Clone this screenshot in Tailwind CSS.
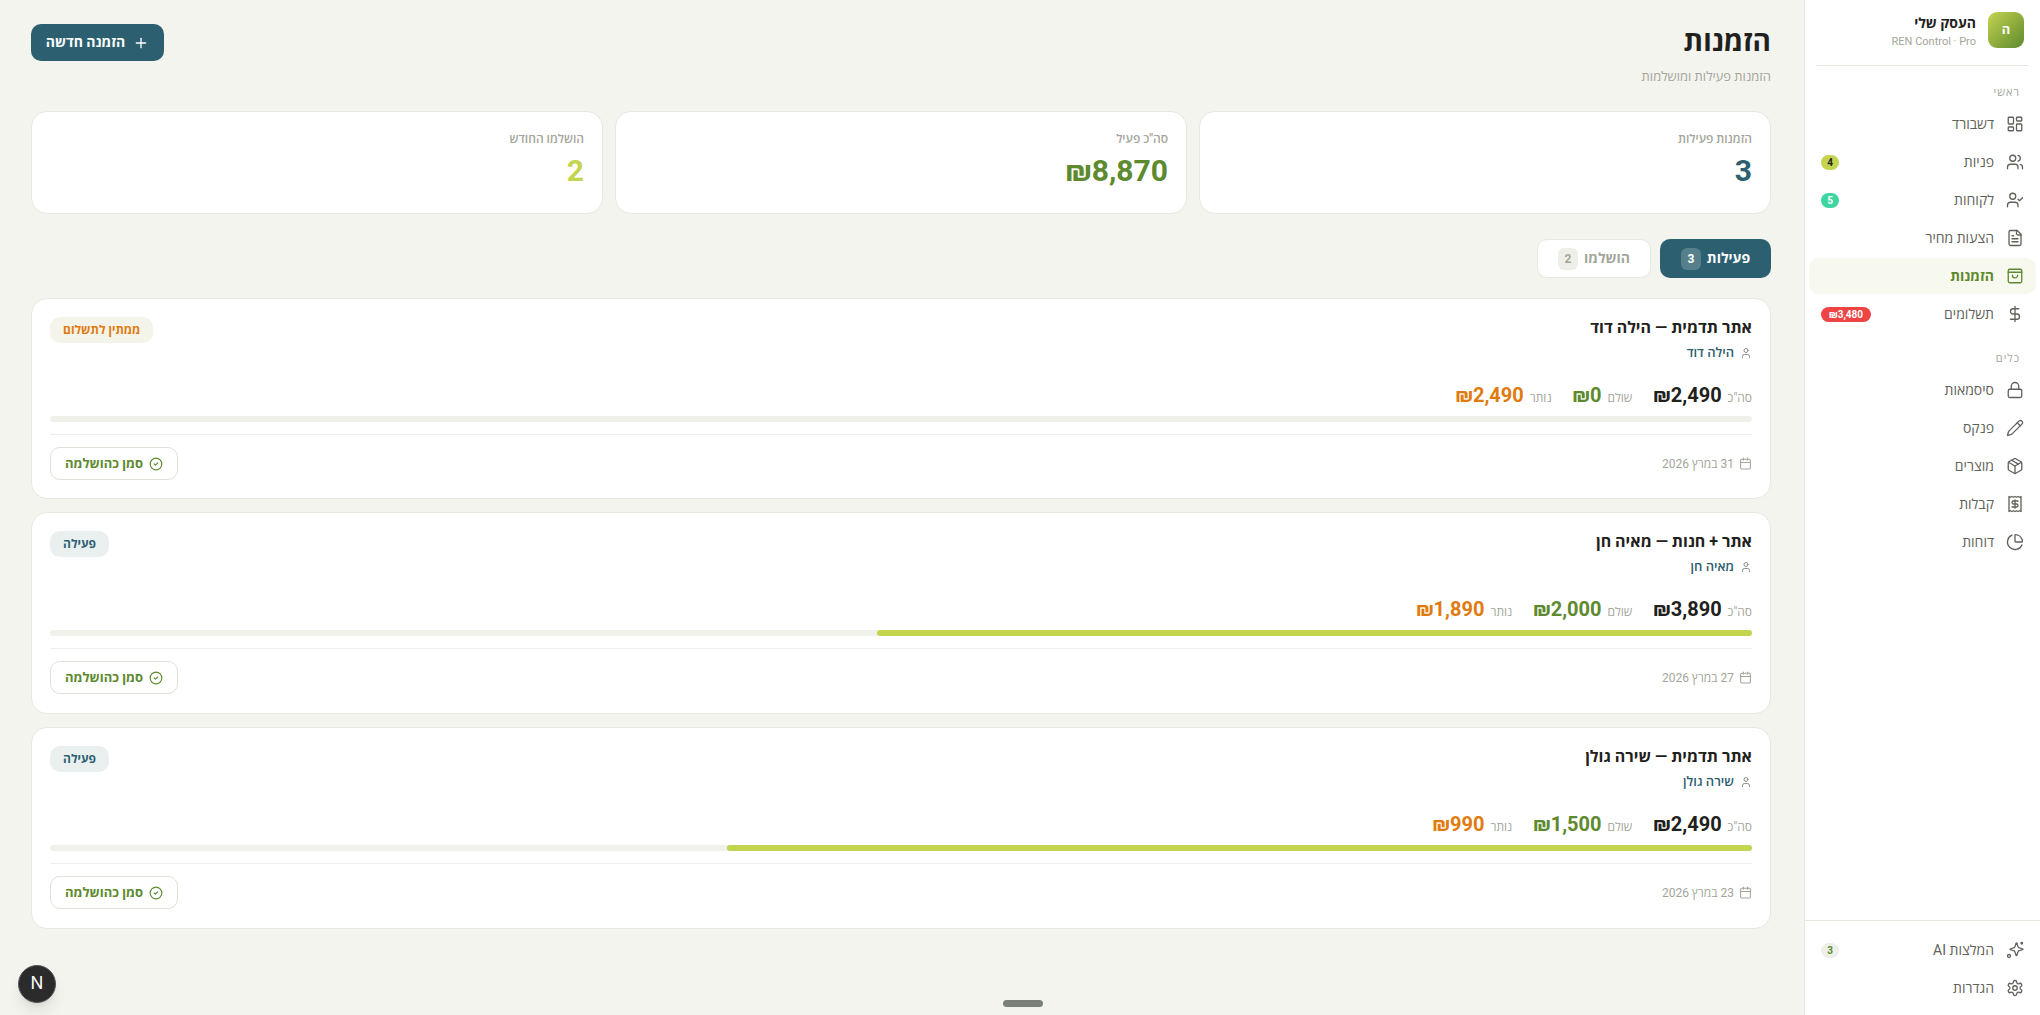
<!DOCTYPE html>
<html lang="he" dir="rtl">
<head>
    <meta charset="UTF-8">
    <title>הזמנות</title>
    <script src="https://cdn.jsdelivr.net/npm/@tailwindcss/browser@4"></script>
</head>
<body class="h-[1015px] overflow-hidden flex bg-[#f4f4ef] text-[#1f211c] font-['Roboto','Open_Sans','Liberation_Sans',sans-serif]">
    <!-- sidebar -->
    <aside class="w-[236px] shrink-0 h-full flex flex-col bg-white border-l border-[#e8e8e1] px-[4px]">
        <div class="mx-[8px] h-[66px] pt-[12px] flex gap-[12px] border-b border-[#e8e8e1] pr-[4px]">
            <div class="w-[36px] h-[36px] rounded-[9px] bg-gradient-to-br from-[#c5d44f] to-[#5d8a2e] flex items-center justify-center text-white text-[13px] font-bold">ה</div>
            <div class="pt-[1px]">
                <div class="text-[14px] leading-[20px] font-bold">העסק שלי</div>
                <div class="text-[11px] leading-[16px] mt-[1px] text-[#a3a69b]">REN Control · Pro</div>
            </div>
        </div>
        <div class="text-[11px] leading-[14px] text-[#a3a69b] tracking-[1px] pr-[16px] mt-[20px] mb-[6px]">ראשי</div>
        <nav class="flex flex-col gap-[2px] text-[14px] text-[#5f6259]">
            <a class="h-[36px] flex items-center gap-[12px] px-[12px] rounded-[10px]">
                <svg class="w-[18px] h-[18px]" viewBox="0 0 24 24" fill="none" stroke="currentColor" stroke-width="1.75" stroke-linecap="round" stroke-linejoin="round"><rect width="7" height="9" x="3" y="3" rx="1"/><rect width="7" height="5" x="14" y="3" rx="1"/><rect width="7" height="9" x="14" y="12" rx="1"/><rect width="7" height="5" x="3" y="16" rx="1"/></svg>
                <span class="flex-1">דשבורד</span>
            </a>
            <a class="h-[36px] flex items-center gap-[12px] px-[12px] rounded-[10px]">
                <svg class="w-[18px] h-[18px]" viewBox="0 0 24 24" fill="none" stroke="currentColor" stroke-width="1.75" stroke-linecap="round" stroke-linejoin="round"><path d="M16 21v-2a4 4 0 0 0-4-4H6a4 4 0 0 0-4 4v2"/><circle cx="9" cy="7" r="4"/><path d="M22 21v-2a4 4 0 0 0-3-3.87"/><path d="M16 3.13a4 4 0 0 1 0 7.75"/></svg>
                <span class="flex-1">פניות</span>
                <span class="w-[18px] h-[15px] rounded-full bg-[#c5d44f] text-[#1f211c] text-[10px] font-bold flex items-center justify-center">4</span>
            </a>
            <a class="h-[36px] flex items-center gap-[12px] px-[12px] rounded-[10px]">
                <svg class="w-[18px] h-[18px]" viewBox="0 0 24 24" fill="none" stroke="currentColor" stroke-width="1.75" stroke-linecap="round" stroke-linejoin="round"><path d="M16 21v-2a4 4 0 0 0-4-4H6a4 4 0 0 0-4 4v2"/><circle cx="9" cy="7" r="4"/><polyline points="16 11 18 13 22 9"/></svg>
                <span class="flex-1">לקוחות</span>
                <span class="w-[18px] h-[15px] rounded-full bg-[#3dd6a0] text-white text-[10px] font-bold flex items-center justify-center">5</span>
            </a>
            <a class="h-[36px] flex items-center gap-[12px] px-[12px] rounded-[10px]">
                <svg class="w-[18px] h-[18px]" viewBox="0 0 24 24" fill="none" stroke="currentColor" stroke-width="1.75" stroke-linecap="round" stroke-linejoin="round"><path d="M15 2H6a2 2 0 0 0-2 2v16a2 2 0 0 0 2 2h12a2 2 0 0 0 2-2V7Z"/><path d="M14 2v4a2 2 0 0 0 2 2h4"/><path d="M10 9H8"/><path d="M16 13H8"/><path d="M16 17H8"/></svg>
                <span class="flex-1">הצעות מחיר</span>
            </a>
            <a class="h-[36px] flex items-center gap-[12px] px-[12px] rounded-[10px] bg-[#f7f8ee] text-[#5d8a2e] font-bold">
                <svg class="w-[18px] h-[18px]" viewBox="0 0 24 24" fill="none" stroke="currentColor" stroke-width="1.75" stroke-linecap="round" stroke-linejoin="round"><path d="M5 3h14a2 2 0 0 1 2 2v14a2 2 0 0 1-2 2H5a2 2 0 0 1-2-2V5a2 2 0 0 1 2-2Z"/><path d="M3 7h18"/><path d="M15.5 11a3.5 3.5 0 0 1-7 0"/></svg>
                <span class="flex-1">הזמנות</span>
            </a>
            <a class="h-[36px] flex items-center gap-[12px] px-[12px] rounded-[10px]">
                <svg class="w-[18px] h-[18px]" viewBox="0 0 24 24" fill="none" stroke="currentColor" stroke-width="1.75" stroke-linecap="round" stroke-linejoin="round"><line x1="12" x2="12" y1="2" y2="22"/><path d="M17 5H9.5a3.5 3.5 0 0 0 0 7h5a3.5 3.5 0 0 1 0 7H6"/></svg>
                <span class="flex-1">תשלומים</span>
                <span class="h-[15px] w-[50px] rounded-full bg-[#ef4444] text-white text-[10px] font-bold flex items-center justify-center">₪3,480</span>
            </a>
        </nav>
        <div class="text-[11px] leading-[14px] text-[#a3a69b] tracking-[1px] pr-[16px] mt-[20px] mb-[6px]">כלים</div>
        <nav class="flex flex-col gap-[2px] text-[14px] text-[#5f6259]">
            <a class="h-[36px] flex items-center gap-[12px] px-[12px]">
                <svg class="w-[18px] h-[18px]" viewBox="0 0 24 24" fill="none" stroke="currentColor" stroke-width="1.75" stroke-linecap="round" stroke-linejoin="round"><rect width="18" height="11" x="3" y="11" rx="2"/><path d="M7 11V7a5 5 0 0 1 10 0v4"/></svg>
                <span class="flex-1">סיסמאות</span>
            </a>
            <a class="h-[36px] flex items-center gap-[12px] px-[12px]">
                <svg class="w-[18px] h-[18px]" viewBox="0 0 24 24" fill="none" stroke="currentColor" stroke-width="1.75" stroke-linecap="round" stroke-linejoin="round"><path d="M21.174 6.812a1 1 0 0 0-3.986-3.987L3.842 16.174a2 2 0 0 0-.5.83l-1.321 4.352a.5.5 0 0 0 .623.622l4.353-1.32a2 2 0 0 0 .83-.497z"/><path d="m15 5 4 4"/></svg>
                <span class="flex-1">פנקס</span>
            </a>
            <a class="h-[36px] flex items-center gap-[12px] px-[12px]">
                <svg class="w-[18px] h-[18px]" viewBox="0 0 24 24" fill="none" stroke="currentColor" stroke-width="1.75" stroke-linecap="round" stroke-linejoin="round"><path d="m7.5 4.27 9 5.15"/><path d="M21 8a2 2 0 0 0-1-1.73l-7-4a2 2 0 0 0-2 0l-7 4A2 2 0 0 0 3 8v8a2 2 0 0 0 1 1.73l7 4a2 2 0 0 0 2 0l7-4A2 2 0 0 0 21 16Z"/><path d="m3.3 7 8.7 5 8.7-5"/><path d="M12 22V12"/></svg>
                <span class="flex-1">מוצרים</span>
            </a>
            <a class="h-[36px] flex items-center gap-[12px] px-[12px]">
                <svg class="w-[18px] h-[18px]" viewBox="0 0 24 24" fill="none" stroke="currentColor" stroke-width="1.75" stroke-linecap="round" stroke-linejoin="round"><path d="M4 2v20l2-1 2 1 2-1 2 1 2-1 2 1 2-1 2 1V2l-2 1-2-1-2 1-2-1-2 1-2-1-2 1Z"/><path d="M16 8h-6a2 2 0 1 0 0 4h4a2 2 0 1 1 0 4H8"/><path d="M12 17.5v-11"/></svg>
                <span class="flex-1">קבלות</span>
            </a>
            <a class="h-[36px] flex items-center gap-[12px] px-[12px]">
                <svg class="w-[18px] h-[18px]" viewBox="0 0 24 24" fill="none" stroke="currentColor" stroke-width="1.75" stroke-linecap="round" stroke-linejoin="round"><path d="M21 12c.552 0 1.005-.449.95-.998a10 10 0 0 0-8.953-8.951c-.55-.055-.998.398-.998.95v8a1 1 0 0 0 1 1z"/><path d="M21.21 15.89A10 10 0 1 1 8 2.83"/></svg>
                <span class="flex-1">דוחות</span>
            </a>
        </nav>
        <div class="mt-auto -mx-[4px] px-[4px] border-t border-[#e8e8e1] pt-[11px] pb-[9px] flex flex-col gap-[2px] text-[14px] text-[#5f6259]">
            <a class="h-[36px] flex items-center gap-[12px] px-[12px]">
                <svg class="w-[18px] h-[18px]" viewBox="0 0 24 24" fill="none" stroke="currentColor" stroke-width="1.75" stroke-linecap="round" stroke-linejoin="round"><path d="M9.9 15.5A2 2 0 0 0 8.5 14l-4.6-1.5a.5.5 0 0 1 0-1L8.5 10A2 2 0 0 0 10 8.500l1.500-4.600a.5.5 0 0 1 1 0L14 8.500A2 2 0 0 0 15.500 10l4.600 1.500a.5.5 0 0 1 0 1L15.500 14a2 2 0 0 0-1.500 1.500l-1.500 4.600a.5.5 0 0 1-1 0z" transform="translate(2 -1)"/><circle cx="21" cy="3" r="1"/><circle cx="4" cy="20" r="2"/></svg>
                <span class="flex-1">המלצות AI</span>
                <span class="w-[18px] h-[15px] rounded-full bg-[#efefe9] text-[#5d8a2e] text-[10px] font-bold flex items-center justify-center">3</span>
            </a>
            <a class="h-[36px] flex items-center gap-[12px] px-[12px]">
                <svg class="w-[18px] h-[18px]" viewBox="0 0 24 24" fill="none" stroke="currentColor" stroke-width="1.75" stroke-linecap="round" stroke-linejoin="round"><path d="M12.22 2h-.44a2 2 0 0 0-2 2v.18a2 2 0 0 1-1 1.73l-.43.25a2 2 0 0 1-2 0l-.15-.08a2 2 0 0 0-2.73.73l-.22.38a2 2 0 0 0 .73 2.73l.15.1a2 2 0 0 1 1 1.72v.51a2 2 0 0 1-1 1.74l-.15.09a2 2 0 0 0-.73 2.73l.22.38a2 2 0 0 0 2.73.73l.15-.08a2 2 0 0 1 2 0l.43.25a2 2 0 0 1 1 1.73V20a2 2 0 0 0 2 2h.44a2 2 0 0 0 2-2v-.18a2 2 0 0 1 1-1.73l.43-.25a2 2 0 0 1 2 0l.15.08a2 2 0 0 0 2.73-.73l.22-.39a2 2 0 0 0-.73-2.73l-.15-.08a2 2 0 0 1-1-1.74v-.5a2 2 0 0 1 1-1.74l.15-.09a2 2 0 0 0 .73-2.73l-.22-.38a2 2 0 0 0-2.73-.73l-.15.08a2 2 0 0 1-2 0l-.43-.25a2 2 0 0 1-1-1.73V4a2 2 0 0 0-2-2z"/><circle cx="12" cy="12" r="3"/></svg>
                <span class="flex-1">הגדרות</span>
            </a>
        </div>
    </aside>

    <main class="flex-1 min-w-0 pt-[24px] px-[33px] pl-[31px] relative">
        <div class="flex justify-between items-start h-[87px]">
            <div>
                <h1 class="text-[28px] leading-[36px] font-bold">הזמנות</h1>
                <p class="text-[13px] leading-[18px] mt-[8px] text-[#a3a69b]">הזמנות פעילות ומושלמות</p>
            </div>
            <button class="h-[37px] w-[133px] rounded-[10px] bg-[#2c6070] text-white text-[14px] font-bold flex items-center justify-center gap-[8px]">
                <svg class="w-[16px] h-[16px]" viewBox="0 0 24 24" fill="none" stroke="currentColor" stroke-width="2" stroke-linecap="round"><path d="M5 12h14"/><path d="M12 5v14"/></svg>
                הזמנה חדשה
            </button>
        </div>

        <div class="grid grid-cols-3 gap-[12px]">
            <div class="h-[103px] bg-white rounded-[16px] border border-[#e8e8e1] px-[18px] pt-[19px]">
                <div class="text-[12px] leading-[16px] font-semibold text-[#a3a69b]">הזמנות פעילות</div>
                <div class="text-[30px] leading-[36px] mt-[6px] font-bold text-[#2c6070]">3</div>
            </div>
            <div class="h-[103px] bg-white rounded-[16px] border border-[#e8e8e1] px-[18px] pt-[19px]">
                <div class="text-[12px] leading-[16px] font-semibold text-[#a3a69b]">סה"כ פעיל</div>
                <div class="text-[30px] leading-[36px] mt-[6px] font-bold text-[#5d8a2e]">₪8,870</div>
            </div>
            <div class="h-[103px] bg-white rounded-[16px] border border-[#e8e8e1] px-[18px] pt-[19px]">
                <div class="text-[12px] leading-[16px] font-semibold text-[#a3a69b]">הושלמו החודש</div>
                <div class="text-[30px] leading-[36px] mt-[6px] font-bold text-[#c5d44f]">2</div>
            </div>
        </div>

        <div class="flex gap-[9px] mt-[25px] text-[14px] font-bold">
            <button class="h-[39px] w-[111px] rounded-[10px] bg-[#2c6070] text-white flex items-center justify-center gap-[6px]">
                פעילות
                <span class="w-[20px] h-[22px] rounded-[6px] bg-white/20 text-[12px] flex items-center justify-center">3</span>
            </button>
            <button class="h-[39px] w-[114px] rounded-[10px] bg-white border border-[#e8e8e1] text-[#a3a69b] flex items-center justify-center gap-[6px]">
                הושלמו
                <span class="w-[20px] h-[22px] rounded-[6px] bg-[#efefe9] text-[12px] flex items-center justify-center">2</span>
            </button>
        </div>

        <div class="flex flex-col gap-[13px] mt-[20px]">
            <!-- order 1 -->
            <div class="h-[201px] bg-white rounded-[16px] border border-[#e8e8e1] px-[18px] pt-[18px]">
                <div class="flex justify-between items-start h-[62px]">
                    <div>
                        <div class="text-[16px] leading-[22px] font-bold">אתר תדמית — הילה דוד</div>
                        <div class="flex items-center gap-[6px] mt-[5px] text-[13px] leading-[18px] font-semibold text-[#2c6070]">
                            <svg class="w-[12px] h-[12px] text-[#8a8d83]" viewBox="0 0 24 24" fill="none" stroke="currentColor" stroke-width="2" stroke-linecap="round" stroke-linejoin="round"><path d="M19 21v-2a4 4 0 0 0-4-4H9a4 4 0 0 0-4 4v2"/><circle cx="12" cy="7" r="4"/></svg>
                            הילה דוד
                        </div>
                    </div>
                    <span class="h-[26px] px-[13px] rounded-[10px] bg-[#f4f4ea] text-[#e07b10] text-[12px] font-bold flex items-center">ממתין לתשלום</span>
                </div>
                <div class="flex gap-[21px] items-baseline h-[37px] pt-[1px]">
                    <div class="flex items-baseline gap-[6px]"><span class="text-[12px] text-[#a3a69b]">סה"כ</span><span class="text-[20px] font-bold">₪2,490</span></div>
                    <div class="flex items-baseline gap-[6px]"><span class="text-[12px] text-[#a3a69b]">שולם</span><span class="text-[20px] font-bold text-[#5d8a2e]">₪0</span></div>
                    <div class="flex items-baseline gap-[6px]"><span class="text-[12px] text-[#a3a69b]">נותר</span><span class="text-[20px] font-bold text-[#e07b10]">₪2,490</span></div>
                </div>
                <div class="h-[6px] rounded-full bg-[#f1f1ec]"></div>
                <div class="border-t border-[#efefe9] mt-[12px] pt-[12px] flex justify-between items-center">
                    <div class="flex items-center gap-[5px] text-[12px] text-[#a3a69b]">
                        <svg class="w-[13px] h-[13px]" viewBox="0 0 24 24" fill="none" stroke="currentColor" stroke-width="2" stroke-linecap="round" stroke-linejoin="round"><path d="M8 2v4"/><path d="M16 2v4"/><rect width="18" height="18" x="3" y="4" rx="2"/><path d="M3 10h18"/></svg>
                        31 במרץ 2026
                    </div>
                    <button class="h-[33px] w-[128px] rounded-[10px] border border-[#e0e0d8] text-[#5d8a2e] text-[13px] font-bold flex items-center justify-center gap-[6px]">
                        <svg class="w-[14px] h-[14px]" viewBox="0 0 24 24" fill="none" stroke="currentColor" stroke-width="2" stroke-linecap="round" stroke-linejoin="round"><circle cx="12" cy="12" r="10"/><path d="m9 12 2 2 4-4"/></svg>
                        סמן כהושלמה
                    </button>
                </div>
            </div>
            <!-- order 2 -->
            <div class="h-[202px] bg-white rounded-[16px] border border-[#e8e8e1] px-[18px] pt-[18px]">
                <div class="flex justify-between items-start h-[62px]">
                    <div>
                        <div class="text-[16px] leading-[22px] font-bold">אתר + חנות — מאיה חן</div>
                        <div class="flex items-center gap-[6px] mt-[5px] text-[13px] leading-[18px] font-semibold text-[#2c6070]">
                            <svg class="w-[12px] h-[12px] text-[#8a8d83]" viewBox="0 0 24 24" fill="none" stroke="currentColor" stroke-width="2" stroke-linecap="round" stroke-linejoin="round"><path d="M19 21v-2a4 4 0 0 0-4-4H9a4 4 0 0 0-4 4v2"/><circle cx="12" cy="7" r="4"/></svg>
                            מאיה חן
                        </div>
                    </div>
                    <span class="h-[26px] px-[13px] rounded-[10px] bg-[#eaeff0] text-[#2c6070] text-[12px] font-bold flex items-center">פעילה</span>
                </div>
                <div class="flex gap-[21px] items-baseline h-[37px] pt-[1px]">
                    <div class="flex items-baseline gap-[6px]"><span class="text-[12px] text-[#a3a69b]">סה"כ</span><span class="text-[20px] font-bold">₪3,890</span></div>
                    <div class="flex items-baseline gap-[6px]"><span class="text-[12px] text-[#a3a69b]">שולם</span><span class="text-[20px] font-bold text-[#5d8a2e]">₪2,000</span></div>
                    <div class="flex items-baseline gap-[6px]"><span class="text-[12px] text-[#a3a69b]">נותר</span><span class="text-[20px] font-bold text-[#e07b10]">₪1,890</span></div>
                </div>
                <div class="h-[6px] rounded-full bg-[#f1f1ec]"><div class="h-full rounded-full bg-[#c5d44f] w-[51.4%]"></div></div>
                <div class="border-t border-[#efefe9] mt-[12px] pt-[12px] flex justify-between items-center">
                    <div class="flex items-center gap-[5px] text-[12px] text-[#a3a69b]">
                        <svg class="w-[13px] h-[13px]" viewBox="0 0 24 24" fill="none" stroke="currentColor" stroke-width="2" stroke-linecap="round" stroke-linejoin="round"><path d="M8 2v4"/><path d="M16 2v4"/><rect width="18" height="18" x="3" y="4" rx="2"/><path d="M3 10h18"/></svg>
                        27 במרץ 2026
                    </div>
                    <button class="h-[33px] w-[128px] rounded-[10px] border border-[#e0e0d8] text-[#5d8a2e] text-[13px] font-bold flex items-center justify-center gap-[6px]">
                        <svg class="w-[14px] h-[14px]" viewBox="0 0 24 24" fill="none" stroke="currentColor" stroke-width="2" stroke-linecap="round" stroke-linejoin="round"><circle cx="12" cy="12" r="10"/><path d="m9 12 2 2 4-4"/></svg>
                        סמן כהושלמה
                    </button>
                </div>
            </div>
            <!-- order 3 -->
            <div class="h-[202px] bg-white rounded-[16px] border border-[#e8e8e1] px-[18px] pt-[18px]">
                <div class="flex justify-between items-start h-[62px]">
                    <div>
                        <div class="text-[16px] leading-[22px] font-bold">אתר תדמית — שירה גולן</div>
                        <div class="flex items-center gap-[6px] mt-[5px] text-[13px] leading-[18px] font-semibold text-[#2c6070]">
                            <svg class="w-[12px] h-[12px] text-[#8a8d83]" viewBox="0 0 24 24" fill="none" stroke="currentColor" stroke-width="2" stroke-linecap="round" stroke-linejoin="round"><path d="M19 21v-2a4 4 0 0 0-4-4H9a4 4 0 0 0-4 4v2"/><circle cx="12" cy="7" r="4"/></svg>
                            שירה גולן
                        </div>
                    </div>
                    <span class="h-[26px] px-[13px] rounded-[10px] bg-[#eaeff0] text-[#2c6070] text-[12px] font-bold flex items-center">פעילה</span>
                </div>
                <div class="flex gap-[21px] items-baseline h-[37px] pt-[1px]">
                    <div class="flex items-baseline gap-[6px]"><span class="text-[12px] text-[#a3a69b]">סה"כ</span><span class="text-[20px] font-bold">₪2,490</span></div>
                    <div class="flex items-baseline gap-[6px]"><span class="text-[12px] text-[#a3a69b]">שולם</span><span class="text-[20px] font-bold text-[#5d8a2e]">₪1,500</span></div>
                    <div class="flex items-baseline gap-[6px]"><span class="text-[12px] text-[#a3a69b]">נותר</span><span class="text-[20px] font-bold text-[#e07b10]">₪990</span></div>
                </div>
                <div class="h-[6px] rounded-full bg-[#f1f1ec]"><div class="h-full rounded-full bg-[#c5d44f] w-[60.24%]"></div></div>
                <div class="border-t border-[#efefe9] mt-[12px] pt-[12px] flex justify-between items-center">
                    <div class="flex items-center gap-[5px] text-[12px] text-[#a3a69b]">
                        <svg class="w-[13px] h-[13px]" viewBox="0 0 24 24" fill="none" stroke="currentColor" stroke-width="2" stroke-linecap="round" stroke-linejoin="round"><path d="M8 2v4"/><path d="M16 2v4"/><rect width="18" height="18" x="3" y="4" rx="2"/><path d="M3 10h18"/></svg>
                        23 במרץ 2026
                    </div>
                    <button class="h-[33px] w-[128px] rounded-[10px] border border-[#e0e0d8] text-[#5d8a2e] text-[13px] font-bold flex items-center justify-center gap-[6px]">
                        <svg class="w-[14px] h-[14px]" viewBox="0 0 24 24" fill="none" stroke="currentColor" stroke-width="2" stroke-linecap="round" stroke-linejoin="round"><circle cx="12" cy="12" r="10"/><path d="m9 12 2 2 4-4"/></svg>
                        סמן כהושלמה
                    </button>
                </div>
            </div>
        </div>

        <!-- dev indicator + drag handle float over the page -->
        <div class="absolute left-[18px] top-[965px] w-[38px] h-[38px] rounded-full bg-[#2b2b2b] border border-[#555] shadow-lg flex items-center justify-center text-white text-[17px] font-['Inter',sans-serif]">N</div>
        <div class="absolute left-[1003px] top-[1000px] w-[40px] h-[7px] rounded-full bg-[#7c8178]"></div>
    </main>
</body>
</html>
